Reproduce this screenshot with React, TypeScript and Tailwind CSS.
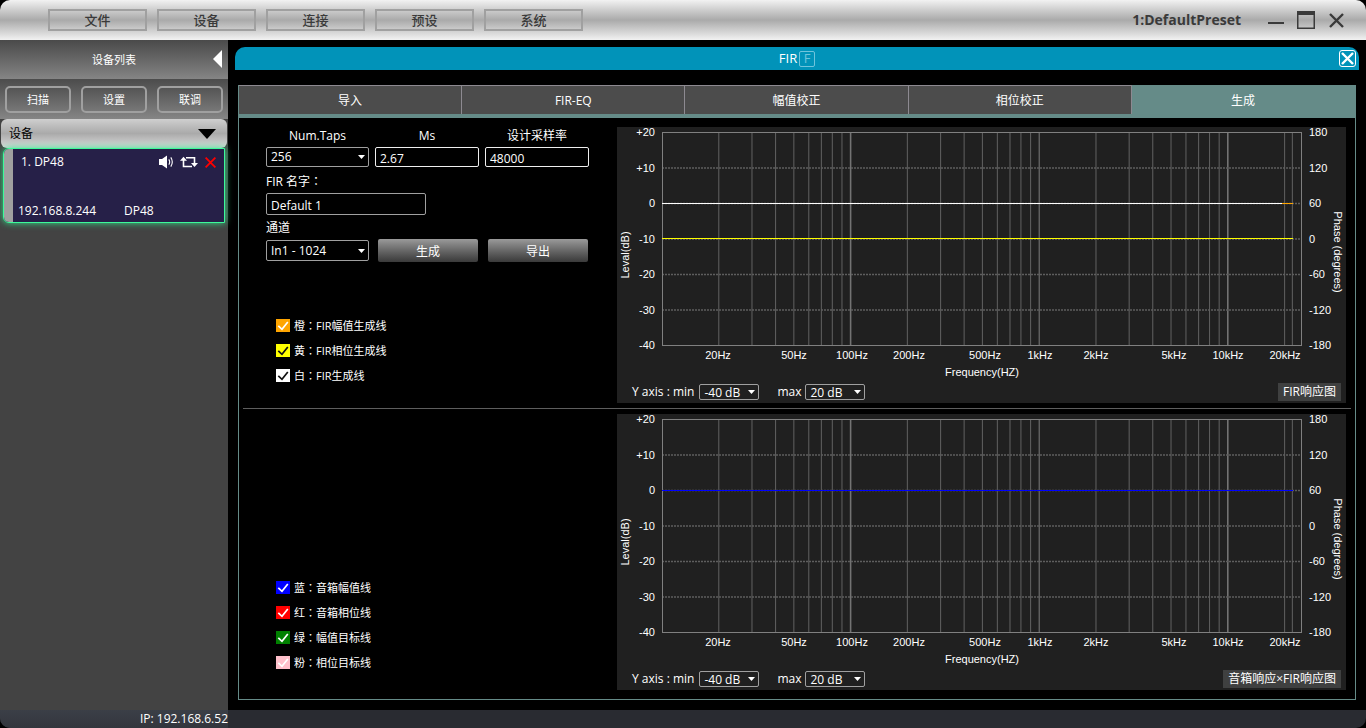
import React, { useState } from 'react';

const MENU = ['文件', '设备', '连接', '预设', '系统'];
const TABS = ['导入', 'FIR-EQ', '幅值校正', '相位校正', '生成'];

// plot area inside the chart drawing
const LEFT = 45;
const RIGHT = 684.5;
const TOP = 5.5;
const BOTTOM = 218.5;
const DECADE = 188.6;
const STEP = 35.5;

const FREQ_LABELS = [
  { text: '20Hz', x: 101 },
  { text: '50Hz', x: 177 },
  { text: '100Hz', x: 235 },
  { text: '200Hz', x: 292 },
  { text: '500Hz', x: 368 },
  { text: '1kHz', x: 423 },
  { text: '2kHz', x: 479 },
  { text: '5kHz', x: 557 },
  { text: '10kHz', x: 611 },
  { text: '20kHz', x: 668 },
];
const LEVELS = ['+20', '+10', '0', '-10', '-20', '-30', '-40'];
const PHASES = ['180', '120', '60', '0', '-60', '-120', '-180'];

const FREQS: number[] = [];
for (const base of [10, 100, 1000, 10000]) {
  for (let n = 1; n < 10; n++) {
    if (n * base > 10 && n * base <= 20000) FREQS.push(n * base);
  }
}
FREQS.push(22000);

const freqX = (f: number) => LEFT + Math.log10(f / 10) * DECADE;

interface Trace {
  color: string;
  y: number;
  end: number;
}

interface LegendItem {
  color: string;
  tick: string;
  name: string;
  label: string;
}

const FIR_TRACES: Trace[] = [
  { color: '#ffa500', y: 76.5, end: 676 },
  { color: '#ffffff', y: 76.5, end: 665 },
  { color: '#ffff00', y: 111.5, end: 676 },
];
const SPEAKER_TRACES: Trace[] = [{ color: '#0000ff', y: 76.5, end: 676 }];

const FIR_LEGEND: LegendItem[] = [
  { color: 'bg-[#ffa500]', tick: '#ffffff', name: '橙', label: 'FIR幅值生成线' },
  { color: 'bg-[#ffff00]', tick: '#111111', name: '黄', label: 'FIR相位生成线' },
  { color: 'bg-white', tick: '#111111', name: '白', label: 'FIR生成线' },
];
const SPEAKER_LEGEND: LegendItem[] = [
  { color: 'bg-[#0000ff]', tick: '#ffffff', name: '蓝', label: '音箱幅值线' },
  { color: 'bg-[#ff0000]', tick: '#ffffff', name: '红', label: '音箱相位线' },
  { color: 'bg-[#008000]', tick: '#ffffff', name: '绿', label: '幅值目标线' },
  { color: 'bg-[#ffc0cb]', tick: '#ffffff', name: '粉', label: '相位目标线' },
];

// the TC face centres the full-width colon
const Colon: React.FC = () => <span className="font-['Noto_Sans_CJK_TC',sans-serif]">：</span>;

interface DropDownProps {
  id: string;
  options: string[];
  className: string;
}

const DropDown: React.FC<DropDownProps> = ({ id, options, className }) => (
  <div className={`relative ${className}`}>
    <select
      id={id}
      className="block h-full w-full appearance-none rounded-xs border border-[#a0a0a0] bg-transparent pl-1 text-white outline-none"
    >
      {options.map((o) => (
        <option key={o} className="bg-black">{o}</option>
      ))}
    </select>
    <svg className="pointer-events-none absolute top-1/2 right-1 -mt-0.5 h-1 w-[7px]" viewBox="0 0 7 4" fill="#fff">
      <path d="M0 0h7L3.5 4z" />
    </svg>
  </div>
);

const Legend: React.FC<{ items: LegendItem[] }> = ({ items }) => (
  <div className="flex flex-col gap-2 pl-[37px] text-[11px] leading-[17px]">
    {items.map((item) => (
      <label key={item.name} className="flex items-center gap-1">
        <span className="relative block h-[13px] w-3.5">
          <input type="checkbox" defaultChecked className={`peer block h-full w-full appearance-none ${item.color}`} />
          <svg
            className="pointer-events-none absolute inset-0 hidden h-full w-full peer-checked:block"
            viewBox="0 0 14 13"
            fill="none"
            stroke={item.tick}
            strokeWidth="1.7"
          >
            <path d="M2.3 6.8 6 10.3 11.8 3" />
          </svg>
        </span>
        <span>{item.name}<Colon />{item.label}</span>
      </label>
    ))}
  </div>
);

interface ResponseChartProps {
  name: string;
  title: string;
  traces: Trace[];
}

const ResponseChart: React.FC<ResponseChartProps> = ({ name, title, traces }) => (
  <div className="min-w-0 flex-1 bg-[#202020] pb-0.5">
    <svg
      viewBox="0 0 729 256"
      className="block w-full"
      fill="#fff"
      fontFamily='"Liberation Sans", Arial, sans-serif'
      fontSize="11"
    >
      {FREQS.map((f) => (
        <line
          key={f}
          x1={freqX(f)}
          x2={freqX(f)}
          y1={TOP}
          y2={BOTTOM}
          stroke={f === 100 || f === 1000 || f === 10000 ? '#737373' : '#5c5c5c'}
          strokeWidth={f === 100 || f === 10000 ? 1.6 : 1.1}
        />
      ))}
      {[1, 2, 3, 4, 5].map((i) => (
        <line
          key={i}
          x1={LEFT}
          x2={RIGHT}
          y1={TOP + i * STEP}
          y2={TOP + i * STEP}
          stroke="#5e5e5e"
          strokeWidth="1.4"
          strokeDasharray="2 1"
        />
      ))}
      <rect x={LEFT + 0.5} y={TOP} width={RIGHT - LEFT - 0.5} height={BOTTOM - TOP} fill="none" stroke="#808080" />
      {traces.map((t) => (
        <line key={t.color} x1={LEFT} x2={t.end} y1={t.y} y2={t.y} stroke={t.color} />
      ))}
      {LEVELS.map((l, i) => (
        <text key={l} x="38" y={9 + i * STEP} textAnchor="end">{l}</text>
      ))}
      {PHASES.map((p, i) => (
        <text key={p} x="692" y={9 + i * STEP}>{p}</text>
      ))}
      {FREQ_LABELS.map((l) => (
        <text key={l.text} x={l.x} y="232" textAnchor="middle">{l.text}</text>
      ))}
      <text x="365" y="249" textAnchor="middle">Frequency(HZ)</text>
      <text transform="translate(12 128) rotate(-90)" textAnchor="middle">Leval(dB)</text>
      <text transform="translate(717 125) rotate(90)" textAnchor="middle">Phase (degrees)</text>
    </svg>
    <div className="flex items-center pr-[5px] pl-[15px] text-xs leading-4">
      <label htmlFor={`${name}-min`} className="mr-[5px]">Y axis : min</label>
      <DropDown id={`${name}-min`} options={['-40 dB', '-30 dB', '-20 dB']} className="h-4 w-15" />
      <label htmlFor={`${name}-max`} className="mr-1 ml-[18px]">max</label>
      <DropDown id={`${name}-max`} options={['20 dB', '10 dB', '0 dB']} className="h-4 w-15" />
      <span className="ml-auto bg-[#3f4040] px-[5px] leading-[18px]">{title}</span>
    </div>
  </div>
);

const Sidebar: React.FC = () => (
  <aside className="flex w-57 shrink-0 flex-col bg-[#434343] text-[11px]">
    <div className="relative flex h-[39px] items-center justify-center bg-linear-to-b from-[#4a4a4a] to-[#858585] pt-0.5">
      设备列表
      <button aria-label="收起" className="absolute top-2.5 right-1.5">
        <svg width="9" height="18" viewBox="0 0 9 18" fill="#fff"><path d="M9 0v18L0 9z" /></svg>
      </button>
    </div>
    <div className="flex h-10 items-center justify-between bg-linear-to-b from-[#4c4c4c] to-[#858585] px-[5px]">
      {['扫描', '设置', '联调'].map((b) => (
        <button key={b} className="h-[27px] w-[66px] rounded-[5px] border-2 border-[#a0a0a0] bg-linear-to-b from-[#555] to-[#777] pt-0.5">
          {b}
        </button>
      ))}
    </div>
    <button className="mx-px flex h-[29px] shrink-0 items-center justify-between rounded-md bg-linear-to-b from-[#cfcfcf] via-[#aaa] to-[#dcdcdc] pr-[11px] pl-2 text-xs text-black">
      设备
      <svg width="18" height="10" viewBox="0 0 18 10"><path d="M0 0h18L9 10z" /></svg>
    </button>
    <div className="mr-[3px] ml-[3px] flex h-[75px] overflow-hidden rounded-l-md border border-[#3dfa9a] bg-[#262048] text-xs shadow-[0_0_7px_#2fe08a]">
      <div className="w-[9px] bg-[#a0a0a0]" />
      <div className="flex flex-1 flex-col justify-between pt-[5px] pr-2 pb-[3px] pl-[5px] leading-4">
        <div className="flex items-center pl-[3px]">
          <span className="mr-auto">1. DP48</span>
          <button aria-label="静音">
            <svg width="15" height="14" viewBox="0 0 15 14" fill="#fff">
              <path d="M0 4h3l5-3.6v13.2L3 10H0z" />
              <path d="M9.8 4.4q1.8 2.6 0 5.2M11.8 2.4q3 4.6 0 9.2" fill="none" stroke="#fff" strokeWidth="1.1" />
            </svg>
          </button>
          <button aria-label="同步" className="ml-1.5">
            <svg width="18" height="12" viewBox="0 0 18 12" fill="none" stroke="#fff" strokeWidth="1.6">
              <path d="M3.5 4v6.5H12M6 1.7h8.5V8" />
              <path d="M0 4.8 3.5.8 7 4.8zM11 7l3.5 4L18 7z" fill="#fff" stroke="none" />
            </svg>
          </button>
          <button aria-label="删除" className="ml-[7px]">
            <svg width="11" height="11" viewBox="0 0 11 11" stroke="#f00" strokeWidth="1.8">
              <path d="m.6.6 9.8 9.8M10.4.6.6 10.4" />
            </svg>
          </button>
        </div>
        <div className="flex">
          <span className="w-[106px]">192.168.8.244</span>
          <span>DP48</span>
        </div>
      </div>
    </div>
  </aside>
);

const inputClass = 'block rounded-xs border bg-transparent px-1 pt-0.5 text-white outline-none';
const labelClass = 'mb-[3px] block';
const actionClass = 'h-[23px] w-25 rounded-xs bg-linear-to-b from-[#9a9a9a] to-[#3a3a3a] pt-0.5';

const GenerateForm: React.FC = () => (
  <div className="pt-px pl-[27px] text-xs leading-4">
    <div className="flex gap-1.5">
      <div>
        <label htmlFor="taps" className={`text-center ${labelClass}`}>Num.Taps</label>
        <DropDown id="taps" options={['256', '512', '1024']} className="h-5 w-[103px]" />
      </div>
      <div>
        <label htmlFor="ms" className={`text-center ${labelClass}`}>Ms</label>
        <input id="ms" defaultValue="2.67" className={`h-5 w-26 border-[#eee] ${inputClass}`} />
      </div>
      <div>
        <label htmlFor="rate" className={`text-center ${labelClass}`}>设计采样率</label>
        <input id="rate" defaultValue="48000" className={`h-5 w-26 border-[#eee] ${inputClass}`} />
      </div>
    </div>
    <label htmlFor="fir-name" className={`mt-1.5 w-fit ${labelClass}`}>FIR 名字<Colon /></label>
    <input id="fir-name" defaultValue="Default 1" className={`h-[22px] w-40 border-[#a0a0a0] ${inputClass}`} />
    <label htmlFor="channel" className={`mt-[5px] w-fit ${labelClass}`}>通道</label>
    <div className="flex items-center">
      <DropDown id="channel" options={['In1 - 1024', 'In2 - 1024']} className="h-[21px] w-[103px]" />
      <button className={`ml-[9px] ${actionClass}`}>生成</button>
      <button className={`ml-2.5 ${actionClass}`}>导出</button>
    </div>
  </div>
);

const App: React.FC = () => {
  const [active, setActive] = useState(4);

  return (
    <div className="flex min-h-screen flex-col bg-black font-['Open_Sans','Noto_Sans_CJK_SC',sans-serif] text-white">
      <header className="flex h-10 items-center rounded-t-[10px] bg-linear-to-b from-[#f2f2f2] via-[#aaa] to-[#f2f2f2] pr-[22px] pl-12 text-[#3a3a3a]">
        <nav className="flex gap-2.5">
          {MENU.map((m) => (
            <button key={m} className="h-[22px] w-[99px] border-2 border-[#a0a0a0] text-[13px] leading-4 font-medium">
              {m}
            </button>
          ))}
        </nav>
        <span className="mr-[27px] ml-auto text-sm font-bold">1:DefaultPreset</span>
        <button aria-label="最小化">
          <svg width="16" height="18" viewBox="0 0 16 18" stroke="#3a3a3a" strokeWidth="2"><path d="M0 12h16" /></svg>
        </button>
        <button aria-label="最大化" className="ml-[13px]">
          <svg width="18" height="18" viewBox="0 0 18 18" fill="none" stroke="#3a3a3a">
            <path d="M.75.75h16.5v16.5H.75z" strokeWidth="1.5" />
            <path d="M0 2h18" strokeWidth="4" />
          </svg>
        </button>
        <button aria-label="关闭" className="ml-3.5">
          <svg width="15" height="15" viewBox="0 0 15 15" stroke="#3a3a3a" strokeWidth="2.4"><path d="m1 1 13 13M14 1 1 14" /></svg>
        </button>
      </header>

      <div className="flex flex-1">
        <Sidebar />
        <main className="flex min-w-0 flex-1 flex-col pt-[7px] pr-[7px] pb-2.5 pl-[7px]">
          <div className="relative flex h-[23px] items-center justify-center gap-0.5 rounded-t-[10px] bg-[#0193b9] text-[13px]">
            FIR
            <span className="flex size-4 items-center justify-center rounded-xs border border-[#6fc4dc] text-[#6fc4dc]">F</span>
            <button aria-label="关闭 FIR" className="absolute top-[3px] right-[3px]">
              <svg width="17" height="17" viewBox="0 0 17 17" fill="none" stroke="#fff">
                <rect x=".5" y=".5" width="16" height="16" rx="2.5" />
                <path d="m3 3 11 11M14 3 3 14" strokeWidth="2.4" />
              </svg>
            </button>
          </div>

          <section className="mt-[15px] mr-[3px] ml-[3px] flex flex-1 flex-col border border-t-0 border-[#658b88]">
            <div className="flex border-b-4 border-[#658b88] text-xs">
              {TABS.map((t, i) => (
                <button
                  key={t}
                  onClick={() => setActive(i)}
                  className={`h-[29px] flex-1 border-t border-r pt-0.5 ${
                    i === active ? 'border-[#658b88] bg-[#658b88]' : 'border-[#8d8a91] bg-[#4c4c4c]'
                  }`}
                >
                  {t}
                </button>
              ))}
            </div>
            <div className="flex pt-[9px] pr-[9px] pb-[5px]">
              <div className="flex w-[378px] shrink-0 flex-col justify-between pb-[19px]">
                <GenerateForm />
                <Legend items={FIR_LEGEND} />
              </div>
              <ResponseChart name="fir" title="FIR响应图" traces={FIR_TRACES} />
            </div>
            <hr className="mx-1 border-[#5e5e5e]" />
            <div className="flex pt-[5px] pr-[9px] pb-[9px]">
              <div className="flex w-[378px] shrink-0 flex-col justify-end pb-[19px]">
                <Legend items={SPEAKER_LEGEND} />
              </div>
              <ResponseChart name="speaker" title="音箱响应×FIR响应图" traces={SPEAKER_TRACES} />
            </div>
          </section>
        </main>
      </div>

      <footer className="flex h-[18px] overflow-hidden rounded-b-[10px] bg-[#292b31] text-xs leading-[17px]">
        <div className="w-57 bg-linear-to-b from-[#3b3f47] to-[#33363d] text-right">IP: 192.168.6.52</div>
      </footer>
    </div>
  );
};

export default App;
